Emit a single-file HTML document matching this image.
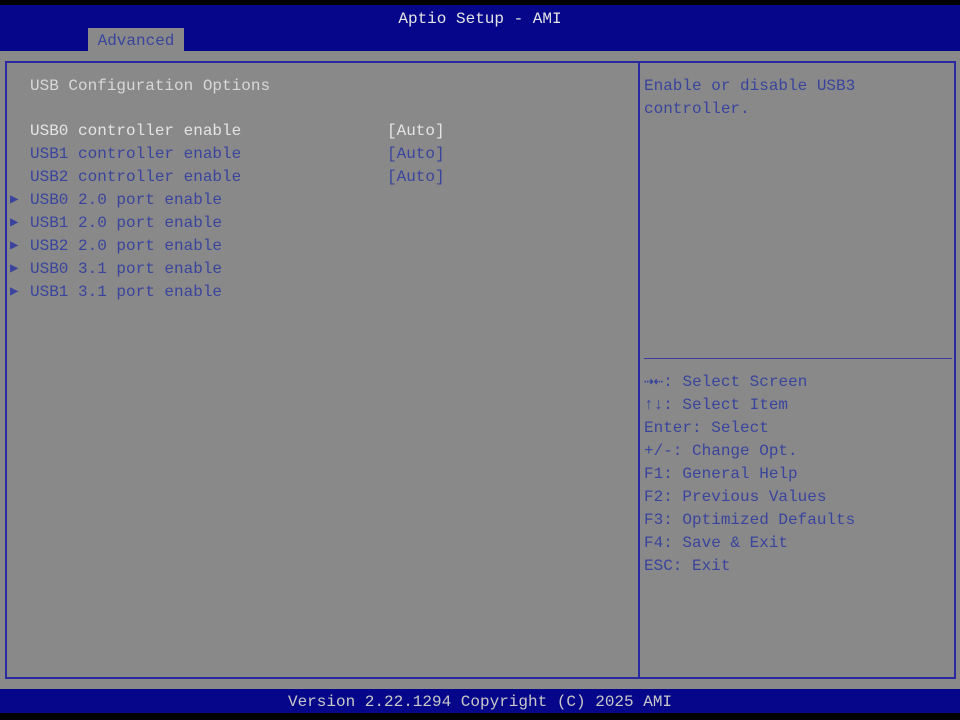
<!DOCTYPE html>
<html><head><style>
body{margin:0;width:960px;height:720px;background:#000;position:relative;overflow:hidden;font-family:"Liberation Mono",monospace;font-size:16px;}
div{position:absolute;white-space:pre;line-height:23px;}
.b{color:#3a449c}
.w{color:#e4e4e4}
.l{color:#d8d8d8}
</style></head><body>
<div style="left:0;top:5px;width:960px;height:46px;background:#06068a"></div>
<div style="left:0;top:51px;width:960px;height:638px;background:#898989"></div>
<div style="left:0;top:689px;width:960px;height:24px;background:#06068a"></div>
<div style="left:88px;top:28px;width:96px;height:23px;background:#898989;"></div>
<div style="left:88px;top:30px;width:96px;color:#3a449c;text-align:center;">Advanced</div>
<div class="w" style="left:0;top:8px;width:960px;text-align:center;">Aptio Setup - AMI</div>
<div style="left:5px;top:61px;width:947px;height:614px;border:2px solid #2a2aa0"></div>
<div style="left:638px;top:62px;width:2px;height:615px;background:#2a2aa0"></div>
<div style="left:644px;top:358px;width:308px;height:1px;background:#3a3a9a"></div>
<div class="l" style="left:30px;top:75px">USB Configuration Options</div>
<div class="w" style="left:30px;top:120px">USB0 controller enable</div>
<div class="w" style="left:387px;top:120px">[Auto]</div>
<div class="b" style="left:30px;top:143px">USB1 controller enable</div>
<div class="b" style="left:387px;top:143px">[Auto]</div>
<div class="b" style="left:30px;top:166px">USB2 controller enable</div>
<div class="b" style="left:387px;top:166px">[Auto]</div>
<div class="b" style="left:10px;top:189px;font-size:14px;line-height:23px">▶
▶
▶
▶
▶</div>
<div class="b" style="left:30px;top:189px">USB0 2.0 port enable
USB1 2.0 port enable
USB2 2.0 port enable
USB0 3.1 port enable
USB1 3.1 port enable</div>
<div class="b" style="left:644px;top:75px">Enable or disable USB3
controller.</div>
<div class="b" style="left:644px;top:371px"><b>⇢⇠</b>: Select Screen
<b>↑↓</b>: Select Item
Enter: Select
+/-: Change Opt.
F1: General Help
F2: Previous Values
F3: Optimized Defaults
F4: Save &amp; Exit
ESC: Exit</div>
<div style="left:0;top:691px;width:960px;text-align:center;color:#c8c8c8">Version 2.22.1294 Copyright (C) 2025 AMI</div>
</body></html>
